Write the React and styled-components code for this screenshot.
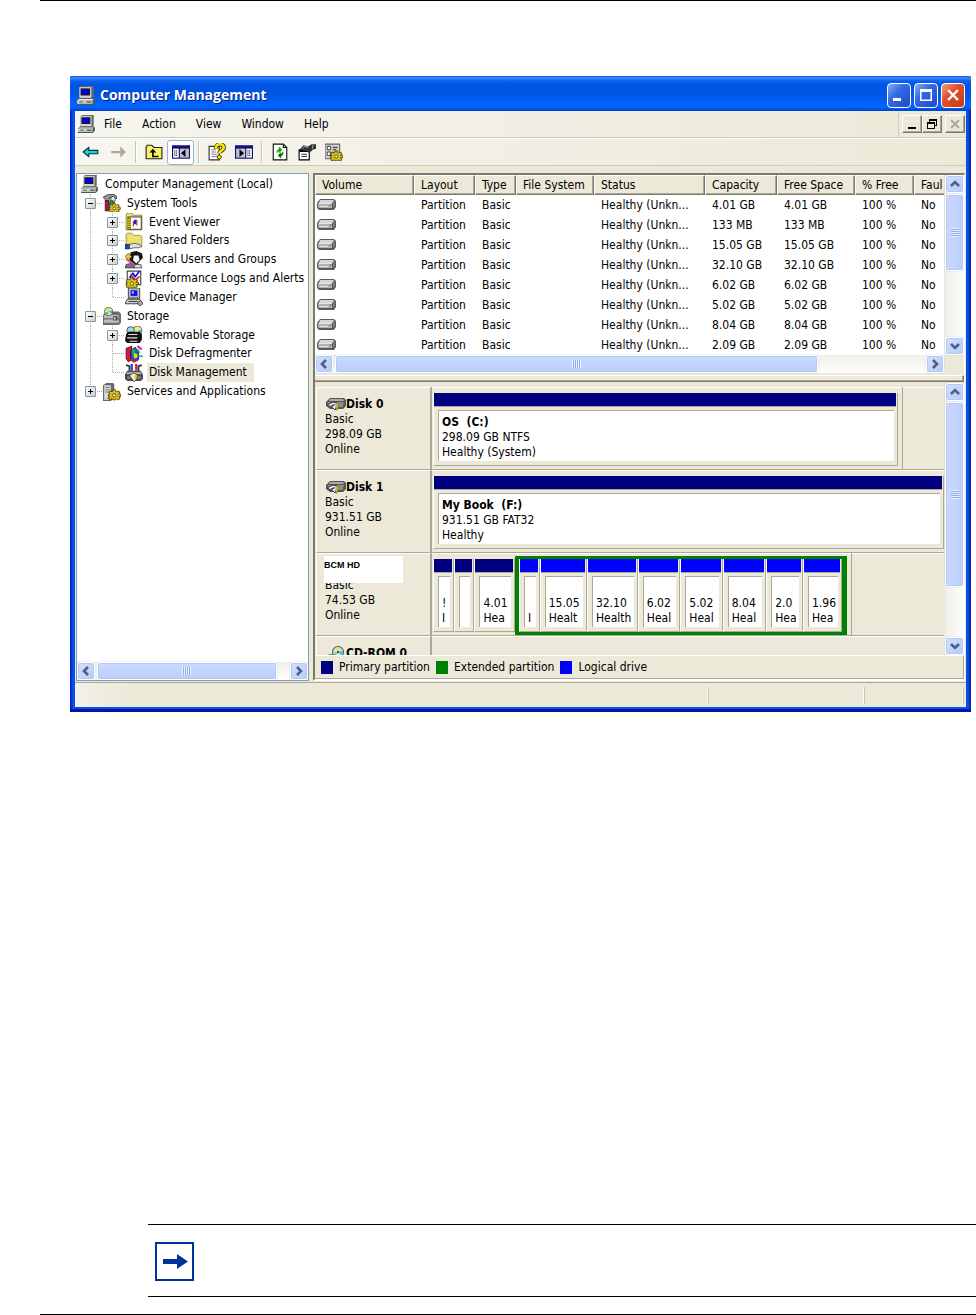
import React from 'react'
import styled, { createGlobalStyle, css } from 'styled-components'

const FACE = '#ece9d8'
const SHADOW = '#aca899'
const DARK = '#7c7a6c'
const NAVY = '#000080'
const GREEN = '#008000'
const BLUE = '#0000ff'

const GlobalStyle = createGlobalStyle`
  * {
    box-sizing: border-box;
  }
  body {
    margin: 0;
    background: #fff;
    color: #000;
    font: 12px/15px "DejaVu Sans Condensed", Tahoma, "DejaVu Sans", sans-serif;
  }
  button {
    font: inherit;
    color: inherit;
    margin: 0;
    padding: 0;
    border: 0;
    background: none;
  }
  svg {
    display: block;
    flex: none;
  }
`

/* ---------- drawings ---------- */

const Svg = ({ size = 18, box = '0 0 16 16', children }) => (
  <svg width={size} height={size} viewBox={box} aria-hidden="true">
    {children}
  </svg>
)

const Computer = ({ size = 18 }) => (
  <Svg size={size}>
    <path d="M2 1l2-1h10v9l-1 1H2z" fill="#6a6a6a" />
    <path d="M2 1h10v9H2z" fill="#d4d4d4" />
    <path d="M3 2h8v6H3z" fill="#1a1a1a" />
    <path d="M4 3h6v4H4z" fill="#0000e8" />
    <path d="M0 12l2-2h12l1 1v3l-2 2H0z" fill="#555" />
    <path d="M1 11h13l-1 1H1z" fill="#eee" />
    <path d="M0 12h13v3H0z" fill="#cfcfcf" />
    <path d="M2 13h3v1H2z" fill="#16a016" />
    <path d="M8 13h4v1H8z" fill="#444" />
  </Svg>
)

const Drive = () => (
  <svg width="19" height="12" viewBox="0 0 19 12" aria-hidden="true">
    <path d="M3 0h14l2 2v6l-2 3H2L0 9V4z" fill="#5a5a5a" />
    <path d="M3 1h13l1 1-2 2H2z" fill="#d6d6d6" />
    <path d="M1 4h14v5H2L1 8z" fill="#b0b0b0" />
    <path d="M2 4h13v1H2z" fill="#e6e6e6" />
    <path d="M16 4l1-2h1v5l-2 2z" fill="#7a7a7a" />
    <path d="M3 7h8v1H3z" fill="#e0e0e0" />
    <path d="M13 5h1v2h-1z" fill="#2fa82f" />
  </svg>
)

const DiskDrive = () => (
  <svg width="20" height="14" viewBox="0 0 20 14" aria-hidden="true">
    <path d="M4 0h14l2 2v6l-3 3H4L0 8V4z" fill="#555" />
    <path d="M4 1h13l1 2H3z" fill="#aaa" />
    <path d="M2 4h15v5H4L1 7z" fill="#8c8c8c" />
    <path d="M1 7l6-3 4 1v3l-2 4-2-2z" fill="#eee" stroke="#333" />
    <path d="M4 8l4-2 1 1-3 2z" fill="#444" />
    <path d="M10 5h2v4l-1 3h-1z" fill="#f2e200" stroke="#555" strokeWidth="0.6" />
    <path d="M16 4h2v2h-2z" fill="#3fb23f" />
  </svg>
)

const CdDrive = () => (
  <svg width="20" height="16" viewBox="0 0 20 16" aria-hidden="true">
    <path d="M3 8h14l2 2v5H0v-4z" fill="#888" />
    <path d="M2 10h14v5H1z" fill="#ddd" />
    <circle cx="12" cy="6" r="6" fill="#555" />
    <circle cx="12" cy="6" r="5" fill="#cde" />
    <path d="M12 6L9 2l3-1z" fill="#ffe600" />
    <path d="M12 6l5-1-1 4z" fill="#26c6da" />
    <path d="M12 6l-5 1 2 3z" fill="#7ed957" />
    <circle cx="12" cy="6" r="1" fill="#222" />
  </svg>
)

const Gear = () => (
  <>
    <path
      d="M9 7h2v1l1 1 1-1 2 1-1 2h2v2h-2l1 2-2 1-1-1-1 1H9l-1-1-2 1-1-2 1-1H5v-2h1L5 9l2-1 1 1z"
      fill="#d8bc10"
      stroke="#3a3200"
      strokeWidth="0.7"
    />
    <circle cx="10" cy="12" r="1.4" fill="#fff" stroke="#3a3200" strokeWidth="0.7" />
  </>
)

const SystemTools = () => (
  <Svg>
    <path d="M0 3l3-2 6-1 3 2v2H8L6 3 5 6H2V4z" fill="#999" stroke="#222" strokeWidth="0.7" />
    <path d="M7 3l2-1 2 2-1 4H7z" fill="#eee" stroke="#222" strokeWidth="0.7" />
    <path d="M2 6h3v9H2z" fill="#d11" stroke="#400" strokeWidth="0.7" />
    <path d="M6 6h3v9H6z" fill="#17a332" stroke="#043" strokeWidth="0.7" />
    <path d="M4 8h2v7H4z" fill="#2038c0" />
    <g transform="translate(1 2) scale(.9)">
      <Gear />
    </g>
  </Svg>
)

const EventViewer = () => (
  <Svg>
    <path d="M1 2l1-2h4l1 2h8v13H1z" fill="#efe07a" stroke="#8a8430" strokeWidth="0.8" />
    <path d="M2 3h13v12H2z" fill="#555" />
    <path d="M5 4h9v10H5z" fill="#fff" />
    <path d="M2 4h3v10H2z" fill="#e8d300" />
    <path d="M7 7h1v5H7zM10 6h1v5h-1z" fill="#d22" />
    <path d="M8 6h2v4H8z" fill="#22d" />
    <path d="M2 5h3M2 7h3M2 9h3M2 11h3M2 13h3" stroke="#333" strokeWidth="0.6" />
  </Svg>
)

const SharedFolder = () => (
  <Svg>
    <path d="M1 2l1-1h4l2 2h6l1 1v8H1z" fill="#ecdd6c" stroke="#9a9340" strokeWidth="0.8" />
    <path d="M2 4h12v7H2z" fill="#f0e06a" />
    <path d="M0 11h4v4H0z" fill="#1448c8" stroke="#012" strokeWidth="0.6" />
    <path d="M4 11l4-1 5 1 2 2-3 1H8l-4 1z" fill="#ddd" stroke="#333" strokeWidth="0.6" />
  </Svg>
)

const Users = () => (
  <Svg>
    <path d="M5 1l5-1 5 2 1 4-3 3-2 3-4 1-3-5z" fill="#151515" />
    <path d="M8 4l4 0 1 4-3 3-3-3z" fill="#f4f4f4" />
    <path d="M0 5l3-3 3 3-3 3z" fill="#e8d020" stroke="#333" strokeWidth="0.6" />
    <path d="M1 7l8 6" stroke="#e05a8a" strokeWidth="2" />
    <path d="M1 12l4-1 4 4H0z" fill="#6a7890" stroke="#222" strokeWidth="0.6" />
    <path d="M9 12h5l1 3H8z" fill="#ddd" stroke="#222" strokeWidth="0.6" />
  </Svg>
)

const Performance = () => (
  <Svg>
    <path d="M2 1h12v12H2z" fill="#fff" stroke="#444" />
    <path d="M5 2v10M8 2v10M11 2v10M3 6h10M3 9h10" stroke="#aab" strokeWidth="0.5" />
    <path d="M4 7l3-4 2 3 4-5" stroke="#00f" strokeWidth="1.4" fill="none" />
    <path d="M5 4l4 5 4-3" stroke="#e01010" strokeWidth="1.2" fill="none" />
    <g transform="translate(-4 0)">
      <Gear />
    </g>
  </Svg>
)

const DeviceManager = () => (
  <Svg>
    <path d="M3 0h10v9H3z" fill="#bbb" stroke="#555" />
    <path d="M5 2h6v5H5z" fill="#1010e0" />
    <path d="M6 3h2v2H6z" fill="#8cf" />
    <path d="M2 10h11l2 3v1H0z" fill="#d8d8d8" stroke="#333" strokeWidth="0.8" />
    <path d="M3 12h8" stroke="#444" />
    <path d="M11 13l3-2 2 3-3 2z" fill="#aaa" stroke="#222" strokeWidth="0.6" />
  </Svg>
)

const Storage = () => (
  <Svg>
    <path d="M0 7l3-3h11l2 2v8l-2 2H0z" fill="#6c6c6c" />
    <path d="M1 7h13v3H1zM1 11h13v3H1z" fill="#c0c0c0" />
    <circle cx="5" cy="4" r="3.6" fill="#d6e9d0" stroke="#444" strokeWidth="0.7" />
    <path d="M5 4L3 1l3-1z" fill="#f4d800" />
    <path d="M5 4l3-1v3z" fill="#22bde0" />
    <path d="M5 4L2 5l2 2z" fill="#3cc23c" />
    <path d="M9 8h4v4H9z" fill="#555" />
    <path d="M10 9h1v2h-1z" fill="#fff" />
  </Svg>
)

const Removable = () => (
  <Svg>
    <circle cx="11" cy="4" r="4" fill="#ffe97a" stroke="#333" strokeWidth="0.7" />
    <path d="M11 4l4-1-1 4z" fill="#1cc8e8" />
    <circle cx="5" cy="4" r="3.4" fill="#9fd8ee" stroke="#333" strokeWidth="0.7" />
    <path d="M5 4l3 2-3 1z" fill="#31b331" />
    <path d="M1 7l2-2h10l2 2v5l-2 3H2l-2-2z" fill="#111" />
    <path d="M3 7h8v1H3zM2 10h9v1H2zM4 13h7v1H4z" fill="#e4e4e4" />
  </Svg>
)

const Defrag = () => (
  <Svg>
    <path d="M1 3l5-2v12l-3 2-2-3z" fill="#e01836" stroke="#400" strokeWidth="0.7" />
    <path d="M5 5l4-3 3 4v7l-4 2-3-3z" fill="#2450d8" stroke="#012" strokeWidth="0.7" />
    <path d="M6 4l3-1v5l-2 3z" fill="#22b040" />
    <path d="M8 7l3 1v3L8 12z" fill="#f4d800" />
    <path d="M5 13l3 2 4-2" stroke="#e01836" strokeWidth="1.4" fill="none" />
    <path d="M11 1l4 3" stroke="#d818c8" strokeWidth="1.8" />
    <path d="M11 4l2 3" stroke="#20b040" strokeWidth="1.6" />
    <path d="M12 10h4" stroke="#18c0d0" strokeWidth="1.6" />
  </Svg>
)

const DiskTools = () => (
  <Svg>
    <path d="M1 1l3 1v5M15 1l-3 1v5" stroke="#333" strokeWidth="1.6" fill="none" />
    <path d="M6 0v6" stroke="#1850d8" strokeWidth="2" />
    <path d="M10 0v6" stroke="#d02020" strokeWidth="2" />
    <path d="M2 6h12l2 3v4l-2 2H2l-2-2V9z" fill="#4a4a4a" />
    <path d="M2 7h12l1 2H1z" fill="#aaa" />
    <path d="M2 11h12v2H2z" fill="#888" />
    <path d="M4 10l4-2 3 2-1 4-2 2z" fill="#eee" stroke="#222" strokeWidth="0.6" />
    <path d="M8 10h2v4H8z" fill="#f0d800" />
  </Svg>
)

const Services = () => (
  <Svg>
    <path d="M0 2l3-2h6l1 1v12l-3 3H0z" fill="#666" />
    <path d="M1 2h6v13H1z" fill="#d8d8d8" />
    <path d="M2 4h4M2 6h4M2 8h4" stroke="#777" strokeWidth="0.8" />
    <path d="M4 13h2v1H4z" fill="#d22" />
    <g transform="translate(0 -1)">
      <Gear />
    </g>
  </Svg>
)

const Back = () => (
  <Svg>
    <path d="M1 8l5-4v2.500h8v3H6V12z" fill="#10d8e0" stroke="#04313a" />
  </Svg>
)

const Forward = () => (
  <Svg>
    <path d="M15 8l-5-5v4H2v2h8v4z" fill="#aaa69a" />
  </Svg>
)

const UpFolder = () => (
  <Svg>
    <path d="M1 14V4l1-2h4l2 2h7v10z" fill="#fbf264" stroke="#222" />
    <path d="M7 7v5h5" stroke="#000" strokeWidth="1.4" fill="none" />
    <path d="M7 5L4 8.500h6z" fill="#000" />
  </Svg>
)

const ConsoleTree = ({ flip }) => (
  <Svg>
    <path d="M0 2h16v12H0z" fill="#10107c" />
    <path d={flip ? 'M1 5h8v8H1z' : 'M7 5h8v8H7z'} fill="#c3c1cb" />
    <path d={flip ? 'M10 5h5v8h-5z' : 'M1 5h5v8H1z'} fill="#fff" />
    <path d={flip ? 'M4 5.500l4 3.500-4 3.500z' : 'M12 5.500L8 9l4 3.500z'} fill="#000" />
    <path
      d={flip ? 'M11 7h3M11 9h3M11 11h3' : 'M2 7h3M2 9h3M2 11h3'}
      stroke="#222"
      strokeDasharray="1 .5"
    />
  </Svg>
)

const HelpDoc = () => (
  <Svg>
    <path d="M1 3h9v12H1z" fill="#fff" stroke="#333" />
    <path d="M3 6h4M3 8h4M3 10h5M3 12h5" stroke="#777" strokeWidth="0.8" />
    <path d="M7 5c0-5 7-5 7-1 0 3-4 2.500-4 5" fill="none" stroke="#3a3200" strokeWidth="3.800" />
    <path d="M7 5c0-5 7-5 7-1 0 3-4 2.500-4 5" fill="none" stroke="#ffe600" strokeWidth="2.400" />
    <circle cx="10" cy="12.500" r="1.800" fill="#ffe600" stroke="#3a3200" strokeWidth="0.8" />
  </Svg>
)

const Refresh = () => (
  <Svg>
    <path d="M2 1h9l3 3v11H2z" fill="#fff" stroke="#111" />
    <path d="M11 1v3h3" fill="none" stroke="#111" />
    <path d="M5 9V7l2-2V3l3 3-3 3V7z" fill="#12a012" />
    <path d="M11 7v3l-2 2v2l-3-3 3-3v2z" fill="#0a7c0a" />
  </Svg>
)

const Properties = () => (
  <Svg>
    <path d="M1 6h9v9H1z" fill="#fff" stroke="#000" />
    <path d="M1 6h9v2H1z" fill="#000" />
    <path d="M3 10h5M3 12h5" stroke="#333" />
    <path d="M2 5l3-3 4 1 3-2h4v4l-3 1-3 3-2-2H5z" fill="#333" />
    <path d="M4 5l2-2 3 1M13 2v3" stroke="#ccc" strokeWidth="0.7" fill="none" />
  </Svg>
)

const Settings = () => (
  <Svg>
    <path d="M0 1h13v13H0z" fill="#ccc" stroke="#666" />
    <path d="M2 3h3v3H2zM2 8h3v3H2z" fill="#fff" stroke="#333" strokeWidth="0.8" />
    <path d="M7 4h4M7 6h3M7 9h2" stroke="#333" />
    <Gear />
  </Svg>
)

const Chevron = ({ turn }) => (
  <svg width="10" height="10" viewBox="0 0 10 10" aria-hidden="true">
    <path
      d="M1 7l4-4 4 4"
      fill="none"
      stroke="#4d6185"
      strokeWidth="2.600"
      transform={`rotate(${turn} 5 5)`}
    />
  </svg>
)

/* ---------- scroll bars ---------- */

const Bar = styled.div`
  display: flex;
  flex-direction: ${(p) => (p.$vertical ? 'column' : 'row')};
  flex: none;
  ${(p) => (p.$vertical ? 'width: 19px;' : 'height: 18px;')}
  background: ${(p) =>
    p.$vertical
      ? 'linear-gradient(90deg, #f0efe7, #fefefb)'
      : 'linear-gradient(#f0efe7, #fefefb)'};
`

const scrollFace = css`
  border: 1px solid #fff;
  border-radius: 3px;
  box-shadow: inset 0 0 0 1px #b4c8f6, 0 0 1px #7d9fe0;
  background: linear-gradient(135deg, #d3e0ff, #b8cbf8);
`

const ScrollButton = styled.button`
  ${scrollFace}
  display: flex;
  align-items: center;
  justify-content: center;
  flex: none;
  width: ${(p) => (p.$vertical ? '19px' : '18px')};
  height: 18px;
`

const Track = styled.div`
  display: flex;
  flex-direction: ${(p) => (p.$vertical ? 'column' : 'row')};
  flex: 1;
  padding: ${(p) => (p.$vertical ? '1px 0' : '0 2px')};
`

const Thumb = styled.div`
  ${scrollFace}
  display: flex;
  align-items: center;
  justify-content: center;
  flex: 0 0 ${(p) => p.$size};
  background: linear-gradient(
    ${(p) => (p.$vertical ? '90deg' : '180deg')},
    #cbdafe,
    #bacdfb
  );
`

const Grip = styled.span`
  width: ${(p) => (p.$vertical ? '8px' : '9px')};
  height: ${(p) => (p.$vertical ? '9px' : '8px')};
  background: repeating-linear-gradient(
    ${(p) => (p.$vertical ? '180deg' : '90deg')},
    #eef4fe 0 1px,
    #8cabee 1px 2px
  );
`

const ScrollBar = ({ vertical, size }) => (
  <Bar $vertical={vertical}>
    <ScrollButton $vertical={vertical} aria-label={vertical ? 'Scroll up' : 'Scroll left'}>
      <Chevron turn={vertical ? 0 : -90} />
    </ScrollButton>
    <Track $vertical={vertical}>
      <Thumb $vertical={vertical} $size={size}>
        <Grip $vertical={vertical} />
      </Thumb>
    </Track>
    <ScrollButton $vertical={vertical} aria-label={vertical ? 'Scroll down' : 'Scroll right'}>
      <Chevron turn={vertical ? 180 : 90} />
    </ScrollButton>
  </Bar>
)

/* ---------- page and window ---------- */

const Page = styled.main`
  padding-left: 40px;
`

const Rule = styled.hr`
  height: 1px;
  margin: 0;
  border: 0;
  background: #000;
`

const Window = styled.section`
  margin: 75px 5px 512px 30px;
  padding: 0 5px 5px;
  background: linear-gradient(90deg, #0019cf, #0a50e6 3px, #0a50e6 calc(100% - 3px), #0019a0);
  box-shadow: inset 0 -3px 0 #0016a8;
  border-radius: 2px 2px 0 0;
`

const TitleBar = styled.header`
  display: flex;
  align-items: center;
  gap: 3px;
  height: 35px;
  margin: 0 -5px;
  padding: 3px 6px 0 7px;
  border-radius: 2px 2px 0 0;
  color: #fff;
  background: linear-gradient(
    #0a5be0,
    #3a8cff 2px,
    #0a5ff0 5px,
    #0054e3 9px,
    #0055e5 18px,
    #0066ff 28px,
    #0060f8 32px,
    #003fc4
  );
`

const Title = styled.h1`
  flex: 1;
  margin: 0;
  padding-left: 1px;
  font: bold 14px/20px "Open Sans", "Noto Sans", sans-serif;
  text-shadow: 1px 1px 0 #0a1883;
`

const CaptionButton = styled.button`
  display: flex;
  align-items: center;
  justify-content: center;
  width: 24px;
  height: 25px;
  border: 1px solid #fff;
  border-radius: 4px;
  background: ${(p) =>
    p.$close
      ? 'linear-gradient(135deg, #f0a088, #e0502c 40%, #c83810)'
      : 'linear-gradient(135deg, #8aaef8, #3568e4 40%, #1c4cc8)'};
`

const MenuBar = styled.nav`
  display: flex;
  height: 27px;
  padding: 0 1px 0 3px;
  border-bottom: 1px solid #d0cdbd;
  background: linear-gradient(90deg, #f6f5ef, ${FACE});
`

const MenuItems = styled.div`
  display: flex;
  align-items: center;
  flex: 1;
  gap: 20px;
  padding-left: 8px;
`

const MenuIcon = styled.span`
  display: flex;
  align-items: center;
`

const ChildButtons = styled.div`
  display: flex;
  align-items: center;
  padding-left: 3px;
  border-left: 1px solid #d0cdbd;
`

const ChildButton = styled.button`
  display: flex;
  align-items: center;
  justify-content: center;
  width: 20px;
  height: 18px;
  margin-left: ${(p) => (p.$apart ? '3px' : '0')};
  border: 1px solid;
  border-color: #fff ${DARK} ${DARK} #fff;
  background: ${FACE};
  box-shadow: inset -1px -1px 0 ${SHADOW};
`

const Toolbar = styled.div`
  display: flex;
  align-items: center;
  height: 28px;
  padding: 0 2px;
  border-top: 1px solid #fff;
  border-bottom: 1px solid #d0cdbd;
  background: linear-gradient(90deg, #f6f5ef, ${FACE});
`

const ToolButton = styled.button`
  display: flex;
  align-items: center;
  justify-content: center;
  width: 27px;
  height: 25px;
  border: 1px solid ${(p) => (p.$pressed ? '#98b5e2' : 'transparent')};
  border-radius: 3px;
  background: ${(p) => (p.$pressed ? '#fff' : 'transparent')};
`

const ToolGap = styled.span`
  width: 9px;
  height: 22px;
  background: linear-gradient(90deg, transparent 4px, #c8c5b2 4px 5px, #fff 5px 6px, transparent 6px);
`

const Body = styled.div`
  display: flex;
  gap: 4px;
  padding: 7px 1px 1px;
  background: ${FACE};
`

/* ---------- console tree ---------- */

const TreePane = styled.aside`
  display: flex;
  flex-direction: column;
  justify-content: space-between;
  flex: 0 0 233px;
  min-width: 0;
  overflow: hidden;
  border: 1px solid #7f9db9;
  background: #fff;
`

const TreeList = styled.ul`
  display: grid;
  grid-template-rows: repeat(12, 1fr);
  height: 226px;
  margin: 1px 0 0;
  padding: 0 0 0 4px;
  overflow: hidden;
  list-style: none;
`

const TreeRow = styled.li`
  display: flex;
  align-items: stretch;
  white-space: nowrap;
`

const dots = {
  down: 'repeating-linear-gradient(#b0ada0 0 1px, transparent 1px 2px)',
  across: 'repeating-linear-gradient(90deg, #b0ada0 0 1px, transparent 1px 2px)',
}

// line: passes through, tee: branches off, end: last branch
const guides = {
  line: css`
    background: ${dots.down} 9px 0 / 1px 100% no-repeat;
  `,
  tee: css`
    background: ${dots.down} 9px 0 / 1px 100% no-repeat,
      ${dots.across} 10px 50% / 12px 1px no-repeat;
  `,
  end: css`
    background: ${dots.down} 9px 0 / 1px 50% no-repeat,
      ${dots.across} 10px 50% / 12px 1px no-repeat;
  `,
}

const Guide = styled.span`
  display: flex;
  align-items: center;
  flex: none;
  width: 22px;
  padding-left: 4px;
  ${(p) => guides[p.$kind]}
`

const Expander = styled.button`
  display: flex;
  align-items: center;
  justify-content: center;
  width: 11px;
  height: 11px;
  border: 1px solid #7898b5;
  border-radius: 1px;
  background: linear-gradient(135deg, #fff, #d2ccbc);
`

const TreeIcon = styled.span`
  display: flex;
  align-items: center;
  margin-right: 4px;
`

const TreeText = styled.span`
  display: flex;
  align-items: center;
  padding: 0 7px 0 2px;
  background: ${(p) => (p.$selected ? FACE : 'transparent')};
`

const treeItems = [
  { text: 'Computer Management (Local)', icon: Computer, guides: [] },
  { text: 'System Tools', icon: SystemTools, guides: ['tee'], sign: '-' },
  { text: 'Event Viewer', icon: EventViewer, guides: ['line', 'tee'], sign: '+' },
  { text: 'Shared Folders', icon: SharedFolder, guides: ['line', 'tee'], sign: '+' },
  { text: 'Local Users and Groups', icon: Users, guides: ['line', 'tee'], sign: '+' },
  { text: 'Performance Logs and Alerts', icon: Performance, guides: ['line', 'tee'], sign: '+' },
  { text: 'Device Manager', icon: DeviceManager, guides: ['line', 'end'] },
  { text: 'Storage', icon: Storage, guides: ['tee'], sign: '-' },
  { text: 'Removable Storage', icon: Removable, guides: ['line', 'tee'], sign: '+' },
  { text: 'Disk Defragmenter', icon: Defrag, guides: ['line', 'tee'] },
  { text: 'Disk Management', icon: DiskTools, guides: ['line', 'end'], selected: true },
  { text: 'Services and Applications', icon: Services, guides: ['end'], sign: '+' },
]

const Tree = () => (
  <TreePane>
    <TreeList>
      {treeItems.map(({ text, icon: Icon, guides: kinds, sign, selected }) => (
        <TreeRow key={text}>
          {kinds.map((kind, i) => (
            <Guide key={i} $kind={kind}>
              {sign && i === kinds.length - 1 && (
                <Expander aria-label={sign === '+' ? `Expand ${text}` : `Collapse ${text}`}>
                  <svg width="7" height="7" viewBox="0 0 7 7" aria-hidden="true">
                    <path d={sign === '+' ? 'M1 3h5v1H1zM3 1h1v5H3z' : 'M1 3h5v1H1z'} />
                  </svg>
                </Expander>
              )}
            </Guide>
          ))}
          <TreeIcon>
            <Icon />
          </TreeIcon>
          <TreeText $selected={selected}>{text}</TreeText>
        </TreeRow>
      ))}
    </TreeList>
    <ScrollBar size="94%" />
  </TreePane>
)

/* ---------- volume list ---------- */

const RightPane = styled.div`
  display: flex;
  flex-direction: column;
  flex: 1;
  min-width: 0;
  border: solid;
  border-width: 2px 1px 2px 2px;
  border-color: ${DARK} #fff #fff ${DARK};
`

const VolumeArea = styled.div`
  display: grid;
  grid-template-columns: minmax(0, 1fr) 19px;
  column-gap: 1px;
`

const VolumeView = styled.div`
  overflow: hidden;
  background: #fff;
`

const VolumeTable = styled.table`
  width: 100%;
  table-layout: fixed;
  border-collapse: separate;
  border-spacing: 0;
`

const HeadCell = styled.th`
  width: ${(p) => p.$width};
  height: 20px;
  padding: 0 0 0 6px;
  overflow: hidden;
  border: 1px solid;
  border-color: #fff ${DARK} ${DARK} #fff;
  background: ${FACE};
  box-shadow: inset -1px -1px 0 ${SHADOW};
  font-weight: normal;
  text-align: left;
  white-space: nowrap;
  &:last-child {
    border-right: 0;
    box-shadow: inset 0 -1px 0 ${SHADOW};
  }
`

const Cell = styled.td`
  height: 20px;
  padding: 0 0 0 ${(p) => (p.$icon ? '2px' : '7px')};
  overflow: hidden;
  white-space: nowrap;
`

const columns = [
  ['Volume', '99px'],
  ['Layout', '61px'],
  ['Type', '41px'],
  ['File System', '78px'],
  ['Status', '111px'],
  ['Capacity', '72px'],
  ['Free Space', '78px'],
  ['% Free', '59px'],
  ['Faul', 'auto'],
]

const sizes = ['4.01 GB', '133 MB', '15.05 GB', '32.10 GB', '6.02 GB', '5.02 GB', '8.04 GB', '2.09 GB']

const Volumes = () => (
  <VolumeArea>
    <VolumeView>
      <VolumeTable>
        <thead>
          <tr>
            {columns.map(([name, width]) => (
              <HeadCell key={name} $width={width}>
                {name}
              </HeadCell>
            ))}
          </tr>
        </thead>
        <tbody>
          {sizes.map((size) => (
            <tr key={size}>
              <Cell $icon>
                <Drive />
              </Cell>
              <Cell>Partition</Cell>
              <Cell>Basic</Cell>
              <Cell />
              <Cell>Healthy (Unkn...</Cell>
              <Cell>{size}</Cell>
              <Cell>{size}</Cell>
              <Cell>100 %</Cell>
              <Cell>No</Cell>
            </tr>
          ))}
        </tbody>
      </VolumeTable>
    </VolumeView>
    <ScrollBar vertical size="54%" />
    <ScrollBar size="82%" />
  </VolumeArea>
)

const Splitter = styled.div`
  height: 7px;
  margin: 2px 0 1px;
  border-top: 1px solid #fff;
  border-right: 1px solid ${DARK};
  border-bottom: 1px solid ${DARK};
  box-shadow: inset -1px -1px 0 ${SHADOW};
`

/* ---------- disk map ---------- */

const DiskArea = styled.div`
  display: flex;
  gap: 1px;
  height: 272px;
`

const DiskView = styled.div`
  flex: 1;
  min-width: 0;
  padding: 4px 0 0 1px;
  overflow: hidden;
`

const DiskRow = styled.div`
  display: flex;
  height: 83px;
`

const DiskLabel = styled.div`
  position: relative;
  flex: 0 0 115px;
  padding: 9px 0 0 8px;
  border: 1px solid;
  border-color: #fff ${SHADOW} ${SHADOW} #fff;
`

const DiskName = styled.div`
  display: flex;
  align-items: center;
  height: 15px;
  padding-left: 1px;
  font-weight: bold;
`

const Patch = styled.div`
  position: absolute;
  top: 2px;
  left: 7px;
  width: 79px;
  height: 27px;
  padding-top: 3px;
  background: #fff;
  font: bold 9px/13px "Liberation Sans Narrow", "Liberation Sans", sans-serif;
`

const Map = styled.div`
  display: flex;
  flex: 1;
  min-width: 0;
  box-shadow: inset 0 -1px 0 ${SHADOW}, inset 0 1px 0 #fff;
`

const Graph = styled.div`
  display: flex;
  align-items: flex-start;
  flex: 0 0 ${(p) => p.$width};
  padding: 3px 4px 0 1px;
  border: solid ${SHADOW};
  border-width: 0 1px 1px;
`

const Partition = styled.div`
  flex: ${(p) => p.$weight} 1 0;
  min-width: 0;
  margin: ${(p) => (p.$inner ? '0' : '3px 0')};
  border: solid;
  border-width: 0 1px 1px;
  border-color: transparent ${SHADOW} ${SHADOW} #fff;
`

const Stripe = styled.div`
  height: 14px;
  margin-right: 1px;
  border-bottom: 1px solid ${SHADOW};
  background: ${(p) => p.$color};
`

const Details = styled.div`
  height: 51px;
  margin: 3px 3px 4px 4px;
  padding: ${(p) => (p.$unnamed ? '19px' : '4px')} 0 0 3px;
  overflow: hidden;
  border: solid ${SHADOW};
  border-width: 1px 0 0 1px;
  background: #fff;
  white-space: pre;
`

const Extended = styled.div`
  display: flex;
  flex: ${(p) => p.$weight} 1 0;
  min-width: 0;
  border: solid ${GREEN};
  border-width: 3px 5px 3px 4px;
`

const Part = ({ weight, color, name, lines, inner }) => (
  <Partition $weight={weight} $inner={inner}>
    <Stripe $color={color} />
    <Details $unnamed={!name}>
      {name && <b>{name}</b>}
      {lines.map((line, i) => (
        <div key={i}>{line}</div>
      ))}
    </Details>
  </Partition>
)

const logicals = [
  { weight: 20, lines: [' ', 'I'] },
  { weight: 48, lines: ['15.05', 'Healt'] },
  { weight: 52, lines: ['32.10', 'Health'] },
  { weight: 43, lines: ['6.02', 'Heal'] },
  { weight: 43, lines: ['5.02', 'Heal'] },
  { weight: 44, lines: ['8.04', 'Heal'] },
  { weight: 37, lines: ['2.0', 'Hea'] },
  { weight: 39, lines: ['1.96', 'Hea'] },
]

const Disks = () => (
  <DiskArea>
    <DiskView>
      <DiskRow>
        <DiskLabel>
          <DiskName>
            <DiskDrive />
            Disk 0
          </DiskName>
          <div>Basic</div>
          <div>298.09 GB</div>
          <div>Online</div>
        </DiskLabel>
        <Map>
          <Graph $width="92%">
            <Part weight={1} color={NAVY} name="OS  (C:)" lines={['298.09 GB NTFS', 'Healthy (System)']} />
          </Graph>
        </Map>
      </DiskRow>
      <DiskRow>
        <DiskLabel>
          <DiskName>
            <DiskDrive />
            Disk 1
          </DiskName>
          <div>Basic</div>
          <div>931.51 GB</div>
          <div>Online</div>
        </DiskLabel>
        <Map>
          <Graph $width="101%">
            <Part weight={1} color={NAVY} name="My Book  (F:)" lines={['931.51 GB FAT32', 'Healthy']} />
          </Graph>
        </Map>
      </DiskRow>
      <DiskRow>
        <DiskLabel>
          <DiskName />
          <div>Basic</div>
          <div>74.53 GB</div>
          <div>Online</div>
          <Patch>BCM HD</Patch>
        </DiskLabel>
        <Map>
          <Graph $width="82%">
            <Part weight={20} color={NAVY} lines={['!', 'I']} />
            <Part weight={19} color={NAVY} lines={[]} />
            <Part weight={40} color={NAVY} lines={['4.01', 'Hea']} />
            <Extended $weight={336}>
              {logicals.map((part, i) => (
                <Part key={i} inner color={BLUE} {...part} />
              ))}
            </Extended>
          </Graph>
        </Map>
      </DiskRow>
      <DiskRow>
        <DiskLabel>
          <DiskName>
            <CdDrive />
            CD-ROM 0
          </DiskName>
        </DiskLabel>
        <Map>
          <Graph $width="102%" />
        </Map>
      </DiskRow>
    </DiskView>
    <ScrollBar vertical size="79%" />
  </DiskArea>
)

const Legend = styled.div`
  display: flex;
  align-items: center;
  gap: 6px;
  height: 24px;
  padding-left: 6px;
  border: solid;
  border-width: 1px 1px 1px 0;
  border-color: #fff ${SHADOW} ${SHADOW} #fff;
`

const Swatch = styled.span`
  width: 12px;
  height: 13px;
  background: ${(p) => p.$color};
`

const StatusBar = styled.footer`
  display: flex;
  height: 25px;
  padding: 4px 2px 3px 0;
  border-top: 1px solid ${SHADOW};
  background: linear-gradient(90deg, #f2f1ea, ${FACE} 60px);
`

const StatusCell = styled.div`
  flex: ${(p) => p.$flex};
  border-right: 1px solid #c8c5b2;
  box-shadow: inset -1px 0 0 #f8f7f0;
`

/* ---------- note under the figure ---------- */

const Note = styled.section`
  margin: 0 0 17px 108px;
  border: solid #000;
  border-width: 1px 0;
  padding: 17px 7px 15px;
`

export default function App() {
  return (
    <Page>
      <GlobalStyle />
      <Rule />
      <Window>
        <TitleBar>
          <Computer size={19} />
          <Title>Computer Management</Title>
          <CaptionButton aria-label="Minimize">
            <svg width="16" height="16" viewBox="0 0 16 16">
              <path d="M2 11h8v3H2z" fill="#fff" />
            </svg>
          </CaptionButton>
          <CaptionButton aria-label="Maximize">
            <svg width="16" height="16" viewBox="0 0 16 16">
              <path d="M2 2h12v12H2zM3.500 5v7.500h9V5z" fill="#fff" fillRule="evenodd" />
            </svg>
          </CaptionButton>
          <CaptionButton $close aria-label="Close">
            <svg width="16" height="16" viewBox="0 0 16 16">
              <path d="M3 3l10 10M13 3L3 13" stroke="#fff" strokeWidth="2.400" />
            </svg>
          </CaptionButton>
        </TitleBar>

        <MenuBar>
          <MenuIcon>
            <Computer />
          </MenuIcon>
          <MenuItems>
            {['File', 'Action', 'View', 'Window', 'Help'].map((name) => (
              <button key={name}>{name}</button>
            ))}
          </MenuItems>
          <ChildButtons>
            <ChildButton aria-label="Minimize console">
              <svg width="12" height="12" viewBox="0 0 12 12">
                <path d="M2 9h8v2H2z" />
              </svg>
            </ChildButton>
            <ChildButton aria-label="Restore console">
              <svg width="12" height="12" viewBox="0 0 12 12">
                <path d="M3 1h8v7H9V7h1V3H4v1H3zM1 4h8v7H1zM2 6v4h6V6z" fillRule="evenodd" />
              </svg>
            </ChildButton>
            <ChildButton $apart aria-label="Close console" disabled>
              <svg width="12" height="12" viewBox="0 0 12 12">
                <path d="M2 2l8 8M10 2l-8 8" stroke={SHADOW} strokeWidth="2" />
              </svg>
            </ChildButton>
          </ChildButtons>
        </MenuBar>

        <Toolbar>
          <ToolButton aria-label="Back">
            <Back />
          </ToolButton>
          <ToolButton aria-label="Forward">
            <Forward />
          </ToolButton>
          <ToolGap />
          <ToolButton aria-label="Up one level">
            <UpFolder />
          </ToolButton>
          <ToolButton $pressed aria-label="Show or hide console tree">
            <ConsoleTree />
          </ToolButton>
          <ToolGap />
          <ToolButton aria-label="Help">
            <HelpDoc />
          </ToolButton>
          <ToolButton aria-label="Show or hide action pane">
            <ConsoleTree flip />
          </ToolButton>
          <ToolGap />
          <ToolButton aria-label="Refresh">
            <Refresh />
          </ToolButton>
          <ToolButton aria-label="Properties">
            <Properties />
          </ToolButton>
          <ToolButton aria-label="Settings">
            <Settings />
          </ToolButton>
        </Toolbar>

        <Body>
          <Tree />
          <RightPane>
            <Volumes />
            <Splitter />
            <Disks />
            <Legend>
              <Swatch $color={NAVY} />
              Primary partition
              <Swatch $color={GREEN} />
              Extended partition
              <Swatch $color={BLUE} />
              Logical drive
            </Legend>
          </RightPane>
        </Body>

        <StatusBar>
          <StatusCell $flex="1" />
          <StatusCell $flex="0 0 156px" />
          <StatusCell $flex="0 0 99px" />
        </StatusBar>
      </Window>

      <Note>
        <svg width="39" height="39" viewBox="0 0 39 39" role="img" aria-label="Note">
          <path d="M1 1h37v37H1z" fill="#fff" stroke="#003399" strokeWidth="2" />
          <path d="M8 17h14v-5l11 7.500L22 27v-5H8z" fill="#003399" />
        </svg>
      </Note>
      <Rule />
    </Page>
  )
}
